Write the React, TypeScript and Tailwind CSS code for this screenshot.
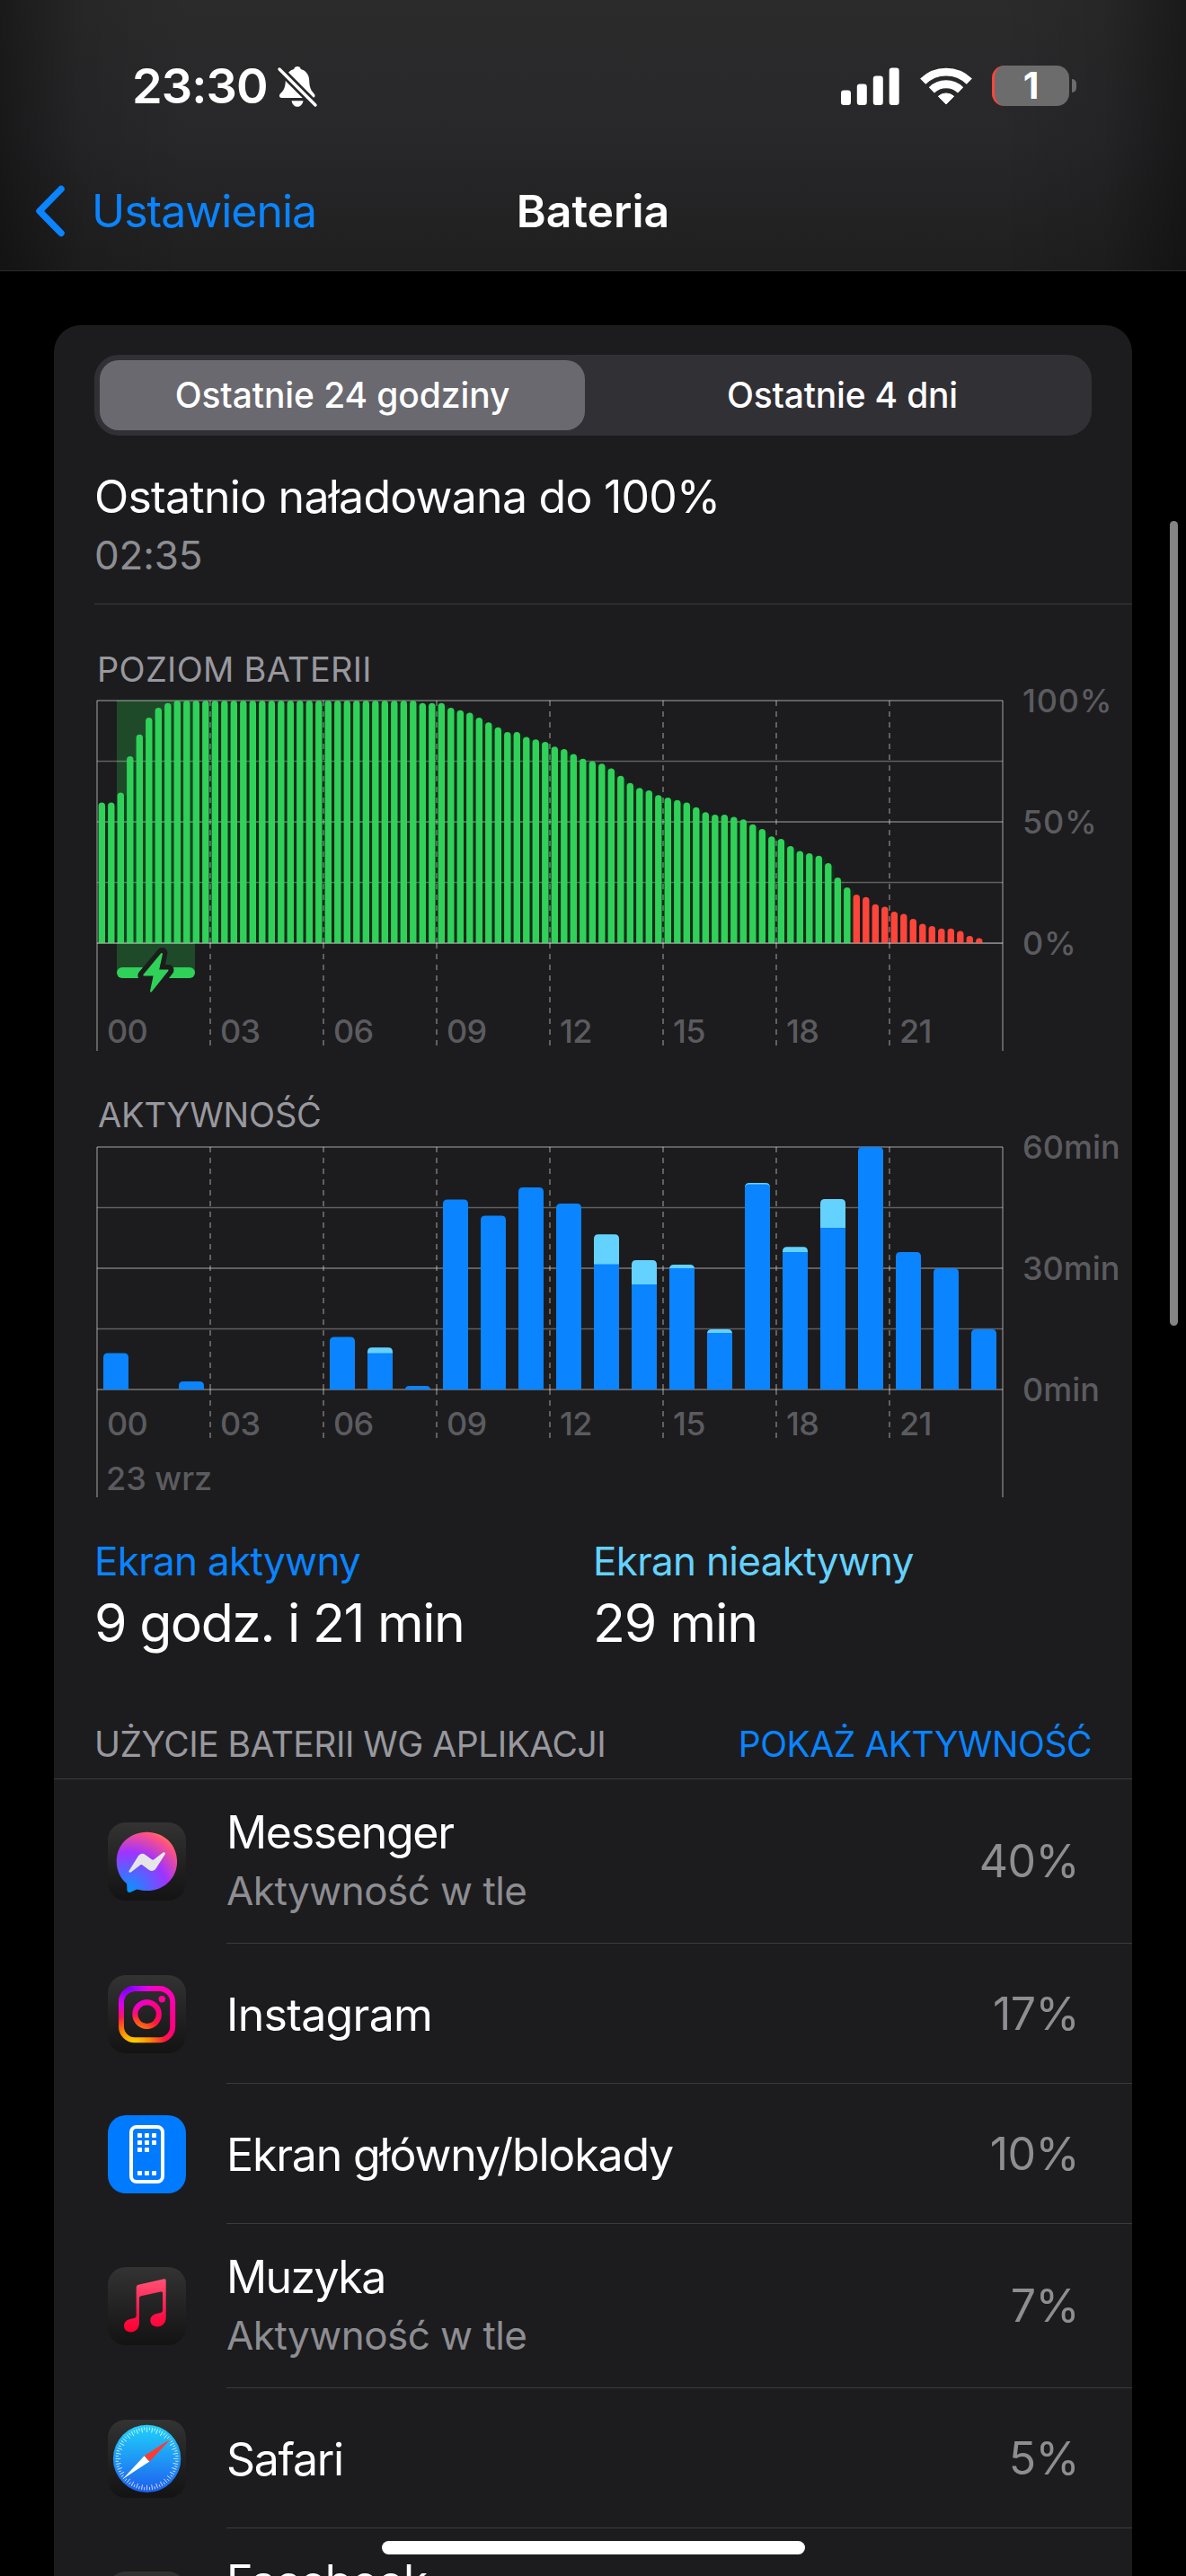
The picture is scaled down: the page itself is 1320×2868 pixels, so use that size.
import type { ReactNode } from 'react';

/* ---------- data ---------- */

const HOURS = ['00', '03', '06', '09', '12', '15', '18', '21'];

// One battery reading per 15 minutes.
const LEVELS = [
  58, 58, 62, 77, 86, 93, 97, 99,
  ...Array<number>(26).fill(100),
  99, 99, 99, 97, 96, 95, 93, 91, 89, 87, 87, 85, 84, 83, 81, 80, 78, 76, 75, 74, 72, 69, 66, 64, 63, 61,
  60, 59, 58, 56, 54, 53, 53, 52, 51, 49, 47, 44, 43, 40, 38, 37, 36, 33, 27, 23,
  20, 19, 16, 15, 13, 12, 10, 8, 7, 6, 6, 5, 3, 2,
];

// [hour, minutes with the screen on, total minutes]
const ACTIVITY: [number, number, number][] = [
  [0, 9, 9], [2, 2, 2], [6, 13, 13], [7, 9, 10.4], [8, 0.9, 0.9], [9, 47, 47], [10, 43, 43], [11, 50, 50],
  [12, 46, 46], [13, 31, 38.4], [14, 26, 32], [15, 30, 30.9], [16, 14, 14.9], [17, 50.8, 51.1], [18, 34, 35.3],
  [19, 40, 47.1], [20, 60, 60], [21, 34, 34], [22, 30, 30], [23, 14.9, 14.9],
];

const LEFT = 48;
const WIDTH = 1008;

/* ---------- status bar glyphs ---------- */

function BellSlash() {
  return (
    <svg viewBox="0 0 50 50" className="h-[50px] w-[50px]">
      <path fill="#fff" d="M25 3C27 3 28.5 4.2 28.8 6 35 7.8 38 12.5 38.2 18.5 38.4 27 40.5 30 43.5 33.2 45.5 35.5 44.5 38 41.5 38H8C5 38 4 35.5 6 33.2 9.5 30 11.6 27 11.8 18.5 12 12.5 15 7.8 21.2 6 21.5 4.2 23 3 25 3Z" />
      <path fill="#fff" d="M18.5 41.2H31.5C30.7 45.2 28.3 47.8 25 47.8S19.3 45.2 18.5 41.2Z" />
      <path stroke="#282828" strokeWidth="9" d="M3 4 47 48" />
      <path stroke="#fff" strokeWidth="3.4" strokeLinecap="round" d="M5 6 45 46" />
    </svg>
  );
}

function Signal() {
  return (
    <svg viewBox="0 0 65 42" className="h-[42px] w-[65px]" fill="#fff">
      <rect x="0" y="25.5" width="11" height="16.5" rx="3.2" />
      <rect x="17.8" y="18.5" width="11" height="23.5" rx="3.2" />
      <rect x="35.8" y="9.5" width="11" height="32.5" rx="3.2" />
      <rect x="53.7" y="0.5" width="11" height="41.5" rx="3.2" />
    </svg>
  );
}

function Wifi() {
  return (
    <svg viewBox="0 0 58 43" className="h-[43px] w-[58px]">
      <g fill="none" stroke="#fff">
        <path strokeWidth="8.8" d="M3.2 16.6A36.8 36.8 0 0 1 54.8 16.6" />
        <path strokeWidth="8.8" d="M12.9 26.3A23 23 0 0 1 45.1 26.3" />
      </g>
      <path fill="#fff" stroke="#fff" strokeWidth="1" strokeLinejoin="round" d="M29 42 20.4 33.2A13 13 0 0 1 37.6 33.2Z" />
    </svg>
  );
}

function Battery() {
  return (
    <div className="flex items-center gap-[3px]">
      <div className="flex h-[45px] w-[86px] items-center justify-center rounded-[14px] border-l-[3px] border-[#ff453a] bg-[#6c6c6d] pr-[2px] text-[41px] leading-[45px] font-bold text-white">
        1
      </div>
      <div className="h-[15px] w-[5px] rounded-r-full bg-[#6c6c6d]" />
    </div>
  );
}

/* ---------- charts ---------- */

function Grid({ bottom, dashEnd }: { bottom: number; dashEnd: number }) {
  return (
    <g fill="none" stroke="#fff" strokeOpacity="0.3">
      {[0, 1, 2, 3, 4].map((i) => (
        <path key={i} strokeWidth={i % 2 ? 1.6 : 2} d={`M${LEFT} ${10 + i * 67.5}H${LEFT + WIDTH}`} />
      ))}
      <path strokeWidth="2" d={`M${LEFT} 10V${bottom}M${LEFT + WIDTH} 10V${bottom}`} />
      {HOURS.slice(1).map((h, i) => (
        <path key={h} strokeWidth="2" strokeDasharray="6 6" d={`M${LEFT + (i + 1) * 126} 10V280M${LEFT + (i + 1) * 126} 280V${dashEnd}`} />
      ))}
    </g>
  );
}

function Labels({ rows, y, children }: { rows: string[]; y: number; children?: ReactNode }) {
  return (
    <g fill="#5b5b5f" fontSize="36" fontWeight="500">
      {rows.map((r, i) => (
        <text key={r} x="1078" y={23 + i * 135} letterSpacing={r.endsWith('%') ? 0.8 : 0}>{r}</text>
      ))}
      {HOURS.map((h, i) => (
        <text key={h} x={LEFT + 11 + i * 126} y={y} letterSpacing="-0.8">{h}</text>
      ))}
      {children}
    </g>
  );
}

function LevelChart() {
  return (
    <svg viewBox="0 0 1200 410" className="block h-[410px] w-[1200px] overflow-visible">
      <rect x="70" y="10" width="87" height="303" fill="#1f4a2a" />
      {LEVELS.map((v, i) =>
        v > 20 ? <rect key={i} x={LEFT + 8.6 + i * 10.5} y={283 - v * 2.7} width="4" height={v * 2.7 - 6} fill="#0a3a1a" fillOpacity="0.55" /> : null,
      )}
      <Grid bottom={400} dashEnd={394} />
      {LEVELS.map((v, i) => (
        <path key={i} fill={v > 20 ? '#30d158' : '#ff453a'} d={`M${LEFT + 1.6 + i * 10.5} 280V${280 - Math.max(0, v * 2.7 - 3.7)}a3.7 3.7 0 0 1 7.4 0V280Z`} />
      ))}
      <path stroke="#fff" strokeOpacity="0.2" strokeWidth="1.5" d={`M${LEFT} 280.200H${LEFT + WIDTH}`} />
      <rect x="70" y="307" width="87" height="12" rx="6" fill="#30d158" />
      <path d="M120.4 291 99.3 316H111.4L107.5 334.7 127.5 310H116.8Z" fill="#30d158" stroke="#1c1c1e" strokeWidth="12" strokeLinejoin="round" />
      <path d="M120 292 100.3 315.6H111.8L108 333.6 126.5 310.4H116Z" fill="#30d158" stroke="#30d158" strokeWidth="2" strokeLinejoin="round" />
      <Labels rows={['100%', '50%', '0%']} y={390.5} />
    </svg>
  );
}

function ActivityChart() {
  return (
    <svg viewBox="0 0 1200 404" className="block h-[404px] w-[1200px] overflow-visible">
      <g transform="translate(0 1)">
        <Grid bottom={400} dashEnd={334} />
        {ACTIVITY.map(([h, on, total]) => {
          const x = LEFT + 7 + h * 42;
          const t = 280 - total * 4.5;
          const y = 280 - on * 4.5;
          const r = Math.min(5, total * 4.5);
          return (
            <g key={h}>
              <path fill={total > on ? '#64d2ff' : '#0a84ff'} d={`M${x} 280V${t + r}q0 ${-r} 5 ${-r}h18q5 0 5 ${r}V280Z`} />
              {total - on > 0.5 && <rect x={x} y={y} width="28" height={280 - y} fill="#0a84ff" />}
              {total > on && total - on <= 0.5 && <path fill="#0a84ff" d={`M${x} 280V${y + 4}q0 -4 5 -4h18q5 0 5 4V280Z`} />}
            </g>
          );
        })}
        <Labels rows={['60min', '30min', '0min']} y={330.5}>
          <text x={LEFT + 10} y="391.5">23 wrz</text>
        </Labels>
      </g>
    </svg>
  );
}

/* ---------- app icons ---------- */

function DarkTile({ children }: { children?: ReactNode }) {
  return (
    <div className="h-[87px] w-[87px] shrink-0 overflow-hidden rounded-[20px] bg-linear-to-b from-[#333333] to-[#131313]">
      <svg viewBox="0 0 87 87" className="block h-[87px] w-[87px]">{children}</svg>
    </div>
  );
}

function MessengerIcon() {
  return (
    <DarkTile>
      <defs>
        <radialGradient id="msg" cx="0.19" cy="0.995" r="1.09">
          <stop offset="0" stopColor="#0099ff" />
          <stop offset="0.61" stopColor="#a033ff" />
          <stop offset="0.935" stopColor="#ff5280" />
          <stop offset="1" stopColor="#ff7061" />
        </radialGradient>
      </defs>
      <path fill="url(#msg)" d="M43.4 10.7C62.4 10.7 77.1 24.6 77.1 43.4S62.4 76 43.4 76C40 76 36.7 75.5 33.6 74.7 33 74.5 32.4 74.6 31.8 74.8L25.2 77.7C23.4 78.5 21.5 77.2 21.4 75.3L21.2 69.3C21.2 68.6 20.9 67.9 20.3 67.4 13.7 61.6 9.7 53.1 9.7 43.4 9.7 24.6 24.4 10.7 43.4 10.7Z" />
      <path fill="#e6e6e8" d="M23.8 53.4 33.8 37.6C35.7 34.6 39 33.8 41.8 36L48.8 41.3C49.6 41.9 50.6 41.9 51.4 41.3L61.4 33.6C63 32.4 64.7 33.8 63.7 35.6L53.6 51.2C51.7 54.1 48.4 54.9 45.6 52.8L38.6 47.5C37.8 46.9 36.8 46.9 36 47.5L26 55.2C24.5 56.4 22.6 55.2 23.8 53.4Z" />
    </DarkTile>
  );
}

function InstagramGlyph({ paint }: { paint: string }) {
  return (
    <g fill="none" stroke={paint} strokeWidth="6">
      <rect x="15" y="15" width="57.2" height="57.2" rx="15" />
      <circle cx="43.6" cy="43.6" r="13.3" />
      <circle cx="60.3" cy="26.8" r="3.7" fill={paint} stroke="none" />
    </g>
  );
}

function InstagramIcon() {
  return (
    <DarkTile>
      <defs>
        <radialGradient id="igWarm" gradientUnits="userSpaceOnUse" cx="28" cy="80" r="72">
          <stop offset="0.08" stopColor="#ffd000" />
          <stop offset="0.28" stopColor="#ff8a00" />
          <stop offset="0.5" stopColor="#ff1a3c" />
          <stop offset="0.64" stopColor="#ff0078" />
          <stop offset="1" stopColor="#ff00b8" />
        </radialGradient>
        <radialGradient id="igCool" gradientUnits="userSpaceOnUse" cx="20" cy="12" r="40">
          <stop offset="0.1" stopColor="#7a00ff" />
          <stop offset="0.55" stopColor="#d800ff" stopOpacity="0.8" />
          <stop offset="1" stopColor="#ff00c8" stopOpacity="0" />
        </radialGradient>
      </defs>
      <InstagramGlyph paint="url(#igWarm)" />
      <InstagramGlyph paint="url(#igCool)" />
    </DarkTile>
  );
}

function HomeScreenIcon() {
  const dots = [[0, 0], [1, 0], [2, 0], [0, 1], [1, 1], [2, 1], [0, 2], [1, 2]];
  return (
    <div className="h-[87px] w-[87px] shrink-0 rounded-[20px] bg-[#007aff]">
      <svg viewBox="0 0 87 87" className="block h-[87px] w-[87px]">
        <rect x="26" y="13" width="35" height="61" rx="6" fill="none" stroke="#fff" strokeWidth="4" />
        {dots.map(([c, r]) => (
          <rect key={`${c}${r}`} x={33 + c * 8} y={20 + r * 8} width="5" height="5" rx="0.8" fill="#fff" />
        ))}
        {[0, 1, 2].map((c) => (
          <rect key={c} x={33 + c * 8} y="62" width="5" height="5" rx="0.8" fill="#fff" />
        ))}
      </svg>
    </div>
  );
}

function MusicIcon() {
  return (
    <DarkTile>
      <defs>
        <linearGradient id="music" x1="0" y1="0" x2="0" y2="1">
          <stop offset="0" stopColor="#ff5273" />
          <stop offset="0.7" stopColor="#ff1048" />
          <stop offset="1" stopColor="#ff0030" />
        </linearGradient>
      </defs>
      <path
        fill="url(#music)"
        d="M31.7 22.5Q31.7 20.3 33.8 19.8L62.5 13.3Q64.7 12.9 64.7 15V56C64.7 62.4 60.7 66.4 55 66.4 50.4 66.4 47.3 63.6 47.3 59.6 47.3 55.4 50.3 52.6 55 51.7L58.5 51C60.4 50.5 61 49.6 61 48V29Q61 27 59 27.5L37 32.2Q35 32.7 35 34.6V62C35 68.5 31 72.4 25.4 72.4 21 72.4 18 69.6 18 65.6 18 61.4 21 58.8 25.6 57.8L29 57C31 56.5 31.7 55.6 31.7 54Z"
      />
    </DarkTile>
  );
}

function SafariIcon() {
  return (
    <DarkTile>
      <defs>
        <linearGradient id="safari" x1="0" y1="0" x2="0" y2="1">
          <stop offset="0" stopColor="#1fd2f9" />
          <stop offset="0.5" stopColor="#1f98f5" />
          <stop offset="1" stopColor="#1e5eee" />
        </linearGradient>
      </defs>
      <circle cx="43.6" cy="43.4" r="37.7" fill="url(#safari)" />
      {Array.from({ length: 72 }, (_, i) => (
        <path key={i} stroke="#fff" strokeOpacity="0.8" strokeWidth="0.9" d={i % 2 ? 'M43.6 8.4V11.6' : 'M43.6 8.4V14'} transform={`rotate(${i * 5} 43.6 43.4)`} />
      ))}
      <path fill="#fff" d="M16.7 66 40.6 40.2 46.4 46.5Z" />
      <path fill="#ff3b30" d="M70.5 21 40.6 40.2 46.4 46.5Z" />
    </DarkTile>
  );
}

/* ---------- list ---------- */

const APPS = [
  { name: 'Messenger', sub: true, pct: '40%', icon: <MessengerIcon />, cls: 'tracking-[-1.3px]' },
  { name: 'Instagram', sub: false, pct: '17%', icon: <InstagramIcon />, cls: 'tracking-[-0.7px]' },
  { name: 'Ekran główny/blokady', sub: false, pct: '10%', icon: <HomeScreenIcon />, cls: 'tracking-[-1.15px]' },
  { name: 'Muzyka', sub: true, pct: '7%', icon: <MusicIcon />, cls: 'tracking-[-1.6px]' },
  { name: 'Safari', sub: false, pct: '5%', icon: <SafariIcon />, cls: 'tracking-[-1.3px]' },
  { name: 'Facebook', sub: true, pct: '', icon: <DarkTile />, cls: 'tracking-[-1.1px]' },
];

function AppRow({ app }: { app: (typeof APPS)[number] }) {
  return (
    <div className={app.sub ? 'flex h-[183px] items-center pl-[60px]' : 'flex h-[156px] items-center pl-[60px]'}>
      {app.icon}
      <div className="ml-[45px] flex h-full flex-1 items-center justify-between border-b border-[#3b3b3e] pr-[59px]">
        {app.sub ? (
          <div>
            <p className={`text-[50px] leading-[66px] ${app.cls}`}>{app.name}</p>
            <p className="text-[44px] leading-[64px] tracking-[-0.55px] text-[#8d8d92]">Aktywność w tle</p>
          </div>
        ) : (
          <p className={`pt-[3px] text-[50px] leading-[66px] ${app.cls}`}>{app.name}</p>
        )}
        <p className="text-[50px] leading-[66px] tracking-[-0.6px] text-[#8d8d92]">{app.pct}</p>
      </div>
    </div>
  );
}

/* ---------- page ---------- */

export default function App() {
  return (
    <div className="relative h-[2868px] w-[1320px] overflow-hidden bg-black font-['Inter',sans-serif] text-white">
      <header className="h-[302px] border-b border-[#2c2c2c] bg-[linear-gradient(to_right,rgba(0,0,0,0.4),rgba(0,0,0,0.1)_7%,transparent_16%,transparent_84%,rgba(0,0,0,0.1)_93%,rgba(0,0,0,0.4)),linear-gradient(to_bottom,#2b2b2c,#28282a_50%,#1f1f20)]">
        <div className="flex h-[191px] items-center justify-between pr-[122px] pl-[147px]">
          <div className="flex items-center">
            <span className="w-[159px] text-[54px] leading-none font-semibold tracking-[-0.9px]">23:30</span>
            <BellSlash />
          </div>
          <div className="flex items-center">
            <Signal />
            <div className="mr-[22px] ml-[23px] flex"><Wifi /></div>
            <Battery />
          </div>
        </div>
        <div className="grid h-[88px] grid-cols-[1fr_auto_1fr] items-center px-[38px]">
          <div className="flex items-center text-[#0a84ff]">
            <svg viewBox="0 0 34 58" className="mr-[30px] h-[58px] w-[34px]" fill="none" stroke="currentColor" strokeWidth="7.5" strokeLinecap="round" strokeLinejoin="round">
              <path d="M30 4.5 6 29 30 53.5" />
            </svg>
            <span className="text-[50px] leading-none tracking-[-1px]">Ustawienia</span>
          </div>
          <h1 className="text-[50px] leading-none font-semibold">Bateria</h1>
        </div>
      </header>

      <main className="mx-[60px] mt-[60px] h-[2600px] rounded-t-[30px] bg-[#1c1c1e]">
        <div className="px-[45px] pt-[33px]">
          <div className="grid h-[90px] grid-cols-2 rounded-[27px] bg-[#313035] text-[39px] font-medium">
            <div className="my-[6px] mr-[9px] ml-[6px] flex items-center justify-center rounded-[21px] bg-[#6a6970] tracking-[-0.1px]">Ostatnie 24 godziny</div>
            <div className="flex items-center justify-center tracking-[-0.2px]">Ostatnie 4 dni</div>
          </div>
        </div>
        <div className="ml-[45px] border-b border-[#3b3b3e] pt-[35px] pb-[22px]">
          <p className="h-[66px] text-[50px] leading-[66px] tracking-[-0.75px]">Ostatnio naładowana do 100%</p>
          <p className="h-[64px] text-[44px] leading-[64px] tracking-[-0.2px] text-[#8d8d92]">02:35</p>
        </div>

        <h2 className="mt-[47px] h-[50px] pl-[48px] text-[38px] leading-[50px] tracking-[0.3px] text-[#98989e]">POZIOM BATERII</h2>
        <LevelChart />
        <h2 className="mt-[36px] h-[50px] pl-[49px] text-[38px] leading-[50px] tracking-[-0.15px] text-[#98989e]">AKTYWNOŚĆ</h2>
        <ActivityChart />

        <div className="mt-[40px] grid grid-cols-[555px_1fr] pl-[45px]">
          <div>
            <p className="text-[44px] leading-[56px] tracking-[-0.7px] text-[#0a84ff]">Ekran aktywny</p>
            <p className="mt-[5px] text-[59px] leading-[72px] tracking-[-1.5px]">9 godz. i 21 min</p>
          </div>
          <div>
            <p className="text-[44px] leading-[56px] tracking-[-0.7px] text-[#64d2ff]">Ekran nieaktywny</p>
            <p className="mt-[5px] text-[59px] leading-[72px] tracking-[-1.2px]">29 min</p>
          </div>
        </div>

        <div className="mt-[74px] flex h-[64px] items-start justify-between border-b border-[#3b3b3e] px-[45px] text-[39px] leading-[50px]">
          <h2 className="tracking-[-0.5px] text-[#98989e]">UŻYCIE BATERII WG APLIKACJI</h2>
          <button className="tracking-[-0.45px] text-[#0a84ff]">POKAŻ AKTYWNOŚĆ</button>
        </div>
        {APPS.map((app) => (
          <AppRow key={app.name} app={app} />
        ))}
      </main>

      <div className="absolute top-[580px] right-[9px] h-[896px] w-[9px] rounded-full bg-[#848484]" />
      <div className="absolute bottom-[24px] left-[425px] h-[15px] w-[471px] rounded-full bg-white" />
    </div>
  );
}
